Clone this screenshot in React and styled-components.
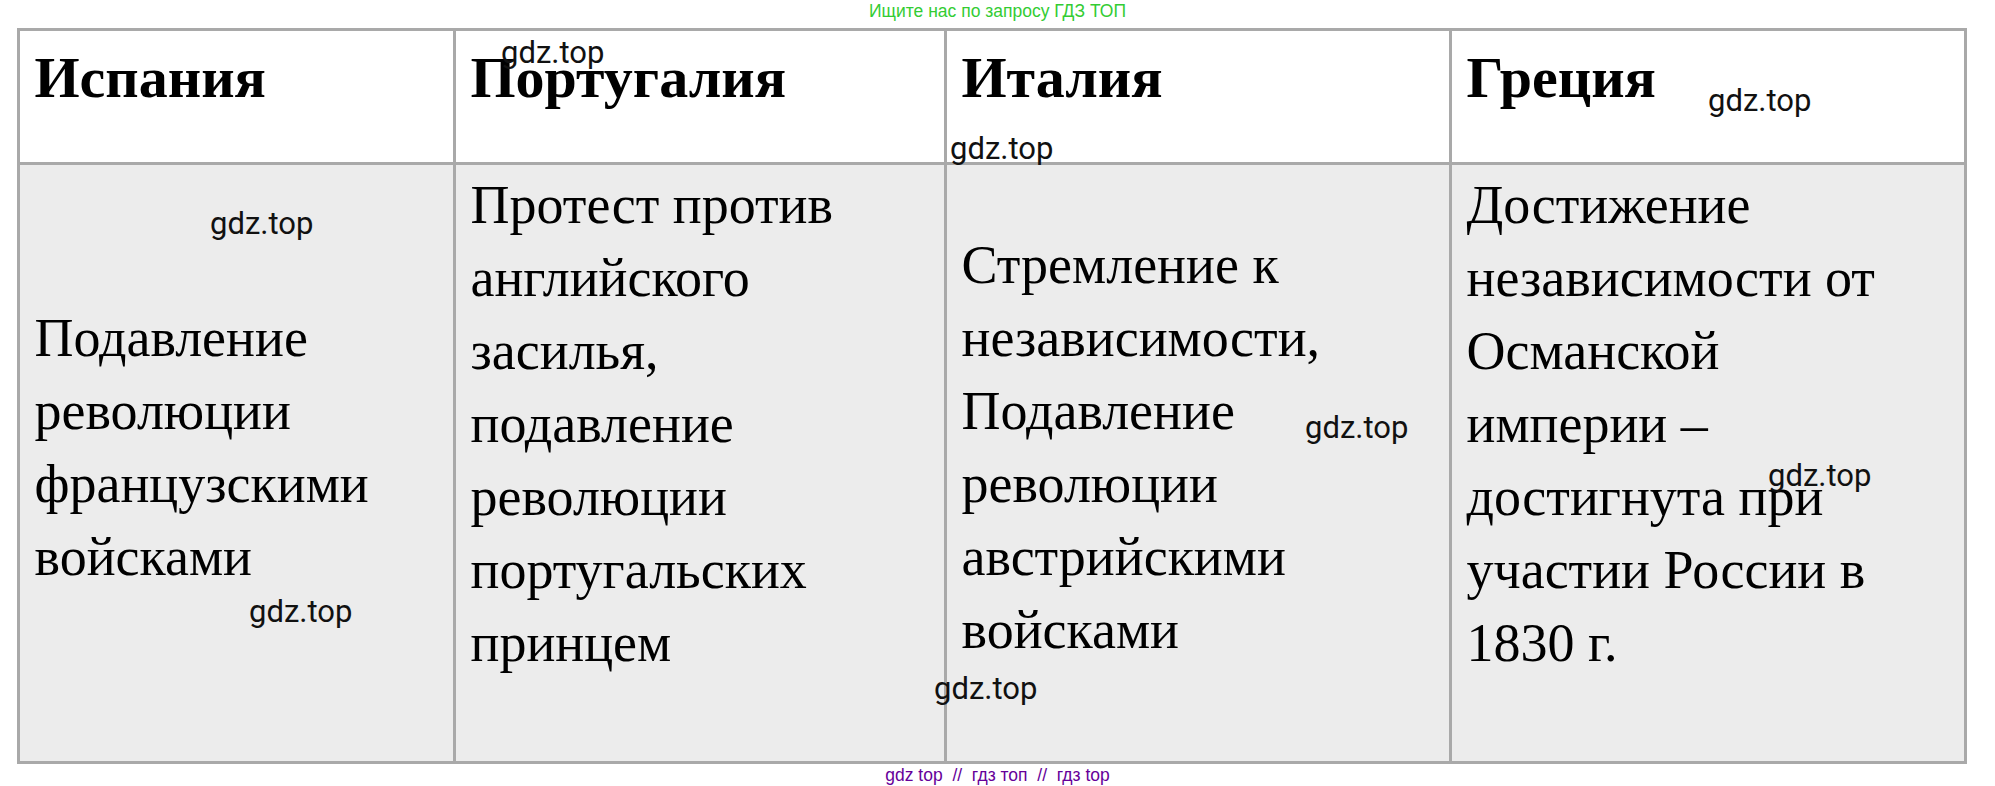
import React from 'react';
import styled, { createGlobalStyle } from 'styled-components';

const Global = createGlobalStyle`
  body { margin: 0; background: #fff; font-family: "Liberation Serif", serif; }
`;

const Page = styled.div`
  position: relative;
  width: 1995px;
  height: 786px;
  display: flex;
  flex-direction: column;
  align-items: center;
`;

const TopNote = styled.div`
  font-family: "Liberation Sans", Arial, sans-serif;
  font-size: 17.5px;
  color: #33cc33;
  height: 56px;
  line-height: 22px;
`;

const Table = styled.table`
  border-collapse: collapse;
  width: 1947px;
  margin-left: -12px;
  table-layout: fixed;
`;

const Head = styled.th`
  border: 3px solid #a9a9a9;
  background: #fff;
  height: 117px;
  padding: 14px 15px 0;
  vertical-align: top;
  text-align: left;
  font-size: 58px;
  font-weight: bold;
  line-height: 66px;
  color: #000;
`;

const Cell = styled.td`
  border: 3px solid #a9a9a9;
  background: #ececec;
  height: 566px;
  padding: 0 15px 30px;
  vertical-align: ${p => p.$align || 'middle'};
  font-size: 54px;
  line-height: 73px;
  color: #000;
  white-space: nowrap;
`;

const Bottom = styled.div`
  font-family: "Liberation Sans", Arial, sans-serif;
  font-size: 17.5px;
  color: #660099;
  margin-top: 1px;
`;

const Mark = styled.span`
  position: absolute;
  font-family: Roboto, "Liberation Sans", sans-serif;
  font-size: 31px;
  color: #111;
`;

const marks = [
  [501, 34], [1708, 82], [950, 130], [210, 205],
  [1305, 409], [1768, 457], [249, 593], [934, 670],
];

const cols = [
  { head: 'Испания', lines: ['Подавление', 'революции', 'французскими', 'войсками'], w: 436 },
  { head: 'Португалия', lines: ['Протест против', 'английского', 'засилья,', 'подавление', 'революции', 'португальских', 'принцем'], w: 491, align: 'top', pad: 4 },
  { head: 'Италия', lines: ['Стремление к', 'независимости,', 'Подавление', 'революции', 'австрийскими', 'войсками'], w: 505 },
  { head: 'Греция', lines: ['Достижение', 'независимости от', 'Османской', 'империи –', 'достигнута при', 'участии России в', '1830 г.'], w: 515, align: 'top', pad: 4 },
];

const Inner = styled.div`
  padding-top: ${p => p.$pad || 0}px;
`;

export default function App() {
  return (
    <Page>
      <Global />
      <TopNote>Ищите нас по запросу ГДЗ ТОП</TopNote>
      <Table>
        <colgroup>
          {cols.map(c => <col key={c.head} style={{ width: c.w }} />)}
        </colgroup>
        <thead>
          <tr>{cols.map(c => <Head key={c.head}>{c.head}</Head>)}</tr>
        </thead>
        <tbody>
          <tr>
            {cols.map(c => (
              <Cell key={c.head} $align={c.align}>
                <Inner $pad={c.pad}>
                  {c.lines.map(l => <div key={l}>{l}</div>)}
                </Inner>
              </Cell>
            ))}
          </tr>
        </tbody>
      </Table>
      <Bottom>gdz top &nbsp;// &nbsp;гдз топ &nbsp;// &nbsp;гдз top</Bottom>
      {marks.map(([x, y], i) => (
        <Mark key={i} style={{ left: x, top: y }}>gdz.top</Mark>
      ))}
    </Page>
  );
}
